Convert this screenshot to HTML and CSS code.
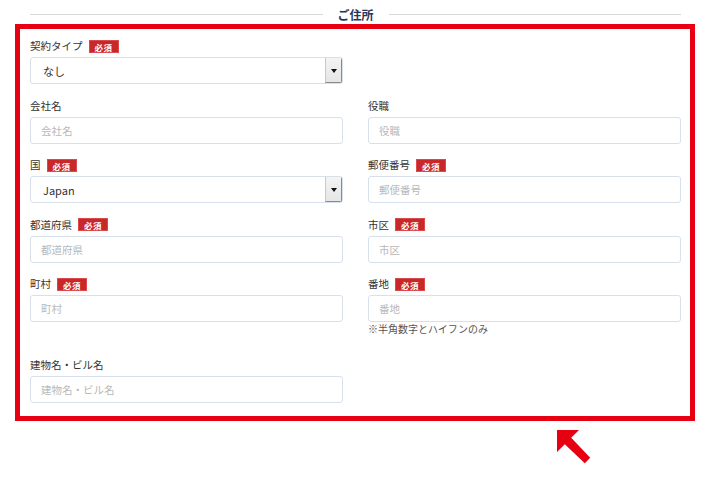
FILE: index.html
```html
<!DOCTYPE html>
<html lang="ja">
<head>
    <meta charset="UTF-8">
    <meta name="viewport" content="width=device-width, initial-scale=1.0">
    <title>ご住所</title>
    <link rel="stylesheet" href="styles.css">
</head>
<body>
    <div class="section-title">
        <span class="line"></span>
        <h2>ご住所</h2>
        <span class="line"></span>
    </div>

    <div class="address-box">
        <div class="form-grid">
            <div class="field">
                <div class="label">契約タイプ <span class="req">必須</span></div>
                <div class="select">
                    <span class="select-value">なし</span>
                    <span class="select-btn"></span>
                </div>
            </div>
            <div class="field empty"></div>

            <div class="field">
                <div class="label">会社名</div>
                <input type="text" placeholder="会社名">
            </div>
            <div class="field">
                <div class="label">役職</div>
                <input type="text" placeholder="役職">
            </div>

            <div class="field">
                <div class="label">国 <span class="req">必須</span></div>
                <div class="select">
                    <span class="select-value">Japan</span>
                    <span class="select-btn"></span>
                </div>
            </div>
            <div class="field">
                <div class="label">郵便番号 <span class="req">必須</span></div>
                <input type="text" placeholder="郵便番号">
            </div>

            <div class="field">
                <div class="label">都道府県 <span class="req">必須</span></div>
                <input type="text" placeholder="都道府県">
            </div>
            <div class="field">
                <div class="label">市区 <span class="req">必須</span></div>
                <input type="text" placeholder="市区">
            </div>

            <div class="field">
                <div class="label">町村 <span class="req">必須</span></div>
                <input type="text" placeholder="町村">
            </div>
            <div class="field">
                <div class="label">番地 <span class="req">必須</span></div>
                <input type="text" placeholder="番地">
                <p class="note">※半角数字とハイフンのみ</p>
            </div>

            <div class="field">
                <div class="label">建物名・ビル名</div>
                <input type="text" placeholder="建物名・ビル名">
            </div>
        </div>
    </div>

    <svg class="pointer" width="36" height="36" viewBox="0 0 36 36">
        <polygon points="0,0 22,0 14.2,7.8 33.2,27.8 27.8,33.2 7.8,14.2 0,22" fill="#e60012"/>
    </svg>
</body>
</html>
```

FILE: styles.css
```css
* {
    margin: 0;
    padding: 0;
    box-sizing: border-box;
}

body {
    font-family: "Noto Sans CJK JP", "Noto Sans", sans-serif;
    background: #fff;
    color: #333;
    position: relative;
    width: 720px;
    height: 488px;
    overflow: hidden;
}

.section-title {
    display: flex;
    align-items: center;
    gap: 15px;
    padding: 5px 39px 0 30px;
    height: 24px;
}

.section-title .line {
    flex: 1;
    height: 1px;
    background: #d9d9d9;
}

.section-title h2 {
    font-size: 12px;
    font-weight: bold;
    color: #263659;
    line-height: 16px;
}

.address-box {
    margin-left: 15px;
    width: 680px;
    border: 5px solid #e60012;
    padding: 10px 9px 13px 10px;
}

.form-grid {
    display: grid;
    grid-template-columns: 313px 313px;
    column-gap: 25px;
    row-gap: 14.5px;
}

.label {
    display: flex;
    align-items: center;
    gap: 6px;
    height: 14px;
    font-size: 10.5px;
    line-height: 14px;
    color: #333;
    margin-bottom: 4px;
}

.req {
    display: inline-block;
    background: #c9282b;
    color: #fff;
    font-size: 8.5px;
    font-weight: bold;
    line-height: 13px;
    height: 13px;
    padding: 0 5px;
    border: 1px solid #d84a4c;
    letter-spacing: 0.5px;
}

input {
    display: block;
    width: 100%;
    height: 27px;
    border: 1px solid #d6e1ec;
    border-radius: 3px;
    padding: 0 10px;
    font-family: inherit;
    font-size: 10.5px;
    color: #333;
    outline: none;
}

input::placeholder {
    color: #b8b8b8;
}

.select {
    display: flex;
    height: 27px;
    border: 1px solid #d6e1ec;
    border-radius: 3px;
    overflow: hidden;
}

.select-value {
    flex: 1;
    display: flex;
    align-items: center;
    padding-left: 12px;
    font-size: 11px;
    color: #333;
}

.select-btn {
    width: 17px;
    position: relative;
    background: linear-gradient(#f4f4f4, #e6e6e6);
    border-left: 1px solid #c8c8c8;
    border-right: 1px solid #8a8a8a;
    border-bottom: 1px solid #8a8a8a;
}

.select-btn::after {
    content: "";
    position: absolute;
    left: 5px;
    top: 11px;
    border-left: 3px solid transparent;
    border-right: 3px solid transparent;
    border-top: 4px solid #111;
}

.note {
    font-size: 10px;
    line-height: 12px;
    color: #555;
    margin-top: 1px;
    margin-bottom: 8px;
}

.pointer {
    position: absolute;
    left: 557px;
    top: 430px;
}
```
